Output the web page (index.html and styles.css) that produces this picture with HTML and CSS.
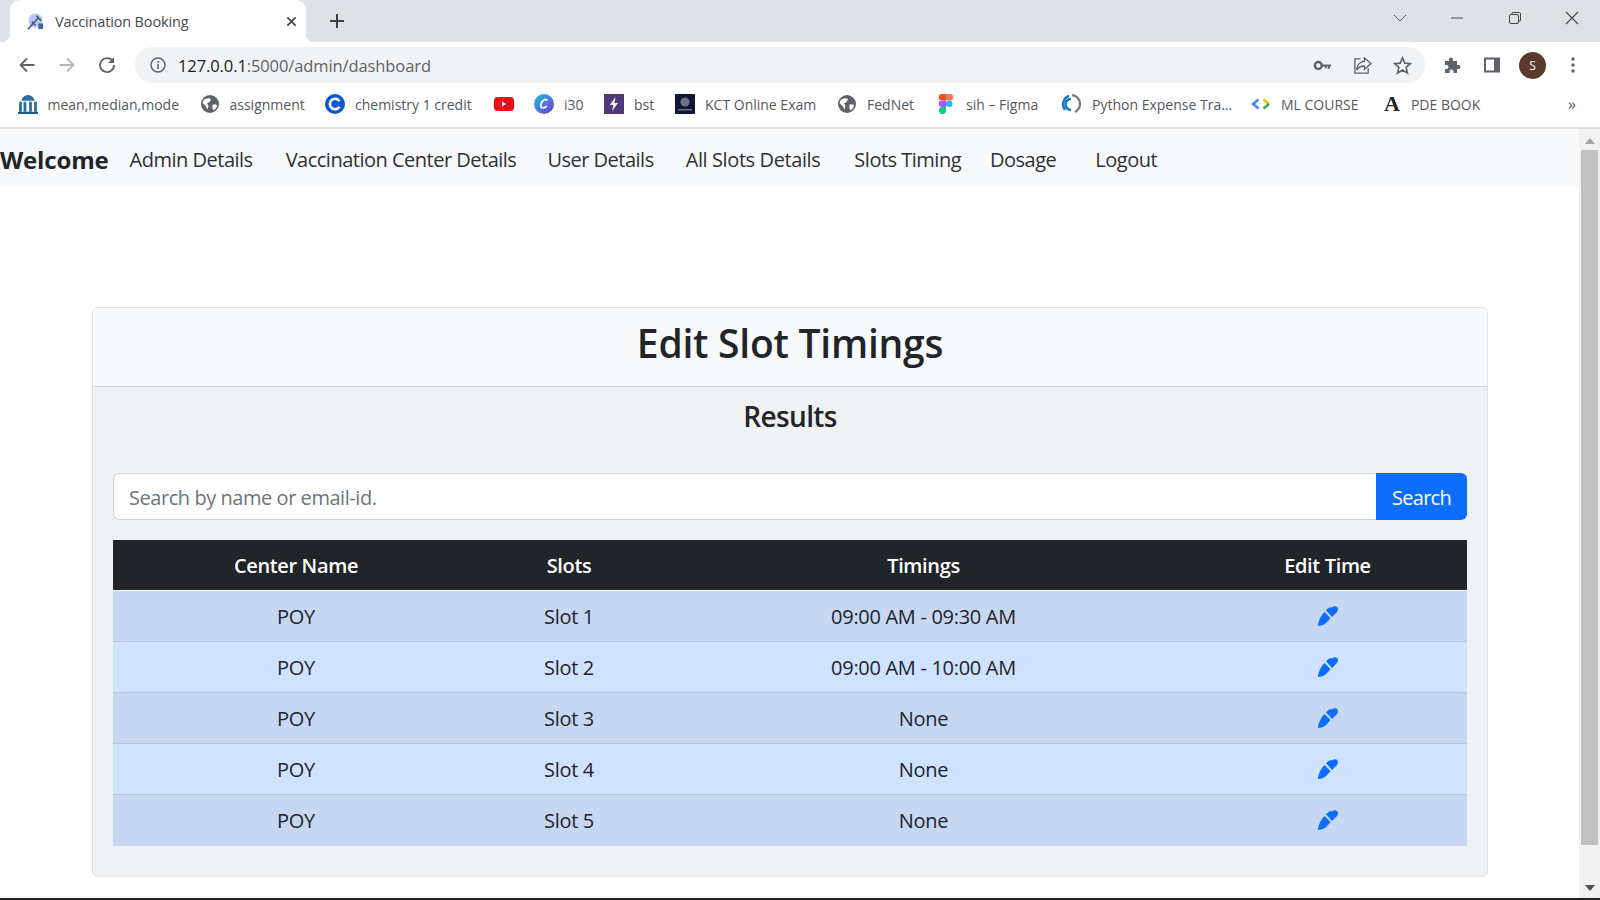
FILE: index.html
```html
<!DOCTYPE html>
<html lang="en">
<head>
<meta charset="utf-8">
<title>Vaccination Booking</title>
<link rel="stylesheet" href="styles.css">
</head>
<body>
<svg class="sprite" width="0" height="0" aria-hidden="true">
  <symbol id="globe" viewBox="0 0 18 18"><circle cx="9" cy="9" r="9" fill="#5f6368"/><path d="M3 4.500 8 3l2 1.500-2 3-2 .5 1.500 3-1 3.500-2-3.500L1.500 8zM11.500 9.500h4l.5 2-3 4-1.500-2z" fill="#fff"/></symbol>
  <symbol id="pen" viewBox="0 0 20 20"><path d="M0 20C0 16 2 11 6.500 6L12.500 12C9 17 5 20 0 20zM8 4.200 10 2.500C11 1.500 13 1 14 1.500 15.500 0 18 0 19.200 1 20.500 2.500 20 4.500 19 6L14 11z" fill="#0d6efd"/></symbol>
</svg>
<div class="tabstrip">
  <div class="tab">
    <svg class="favicon" viewBox="0 0 18 18"><circle cx="9" cy="8" r="7.500" fill="#bcc6ee"/><path d="M1 17 12 5M5 9l4 4M10 3l5 5" stroke="#4a5c8e" stroke-width="1.800" fill="none"/><rect x="12" y="11" width="5" height="6" fill="#3c6aa8"/></svg>
    <span class="tab-title">Vaccination Booking</span>
    <svg class="tab-close" viewBox="0 0 12 12"><path d="M1.500 1.500l9 9M10.500 1.500l-9 9" stroke="#3c4043" stroke-width="1.700"/></svg>
  </div>
  <svg class="newtab" viewBox="0 0 16 16"><path d="M8 1v14M1 8h14" stroke="#3c4043" stroke-width="2"/></svg>
  <div class="window-controls">
    <svg class="wc" viewBox="0 0 14 14"><path d="M1 4l6 6 6-6" stroke="#5f6368" fill="none"/></svg>
    <svg class="wc" viewBox="0 0 14 14"><path d="M1 7h12" stroke="#5f6368" stroke-width="1.200"/></svg>
    <svg class="wc" viewBox="0 0 14 14"><rect x="1.500" y="3.500" width="9" height="9" rx="1.500" fill="none" stroke="#444"/><path d="M4 3.500V2.500A1 1 0 0 1 5 1.500h6.500a1 1 0 0 1 1 1V9a1 1 0 0 1-1 1h-1" fill="none" stroke="#444"/></svg>
    <svg class="wc" viewBox="0 0 14 14"><path d="M1 1l12 12M13 1L1 13" stroke="#444" stroke-width="1.100"/></svg>
  </div>
</div>
<div class="toolbar">
  <svg class="nav-btn" viewBox="0 0 18 18"><path d="M16.500 9H2.500M9 2.500 2.500 9 9 15.500" fill="none" stroke="#5f6368" stroke-width="1.800"/></svg>
  <svg class="nav-btn" viewBox="0 0 18 18"><path d="M1.500 9h14M9 2.500 15.500 9 9 15.500" fill="none" stroke="#b5b8bc" stroke-width="1.800"/></svg>
  <svg class="nav-btn" viewBox="0 0 18 18"><path d="M15 5.500A7 7 0 1 0 16 9" fill="none" stroke="#5f6368" stroke-width="1.800"/><path d="M16 1v6h-6z" fill="#5f6368"/></svg>
  <div class="omnibox">
    <svg class="info" viewBox="0 0 16 16"><circle cx="8" cy="8" r="7" fill="none" stroke="#5f6368" stroke-width="1.500"/><path d="M8 7v5M8 4v1.700" stroke="#5f6368" stroke-width="1.600"/></svg>
    <span class="url"><span class="url-host">127.0.0.1</span>:5000/admin/dashboard</span>
    <svg class="omni-icon key" viewBox="0 0 18 18"><circle cx="5" cy="9" r="3.300" fill="none" stroke="#5f6368" stroke-width="2.400"/><path d="M8 8h9v2h-1v2h-2v-2h-1v1.500h-2V10H8z" fill="#5f6368"/></svg>
    <svg class="omni-icon" viewBox="0 0 20 20"><path d="M8 3H2v15h14v-5" fill="none" stroke="#5f6368" stroke-width="1.400"/><path d="M12 2l7 6-7 6v-3.500C8 10.500 5.500 12 4 15c0-5 3-9 8-9.500z" fill="none" stroke="#5f6368" stroke-width="1.400"/></svg>
    <svg class="omni-icon" viewBox="0 0 20 20"><path d="M10 2l2.400 5.500 6 .5-4.600 4 1.400 6L10 14.800 4.800 18l1.400-6-4.600-4 6-.5z" fill="none" stroke="#5f6368" stroke-width="1.700"/></svg>
  </div>
  <div class="toolbar-right">
    <svg class="tool" viewBox="0 0 18 18"><path d="M1 5h4V3.500a2 2 0 0 1 4 0V5h4v4h1.500a2 2 0 0 1 0 4H13v4H9.500v-1.500a2 2 0 0 0-4 0V17H1v-4h1.500a2 2 0 0 0 0-4H1z" fill="#5f6368"/></svg>
    <svg class="tool" viewBox="0 0 18 18"><path d="M1 1.500h16v15H1zM3 3.500v11h8v-11z" fill="#5f6368" fill-rule="evenodd"/></svg>
    <span class="avatar">S</span>
    <svg class="menu" viewBox="0 0 4 18"><circle cx="2" cy="3" r="1.700" fill="#5f6368"/><circle cx="2" cy="9" r="1.700" fill="#5f6368"/><circle cx="2" cy="15" r="1.700" fill="#5f6368"/></svg>
  </div>
</div>
<div class="bookmarks">
  <span class="bm bm-mean"><svg class="bm-icon" viewBox="0 0 18 18"><path d="M9 1a6 6 0 0 1 6 5H3a6 6 0 0 1 6-5z" fill="#2a6f9e"/><path d="M1 7h2.500v9H1zM5 7h2.500v9H5zM10 7h2.500v9H10zM14.500 7H17v9h-2.500z" fill="#2a6f9e"/><path d="M0 16h18v2H0z" fill="#1d5a84"/></svg>mean,median,mode</span>
  <span class="bm bm-assign"><svg class="bm-icon bm-globe" viewBox="0 0 18 18"><use href="#globe"/></svg>assignment</span>
  <span class="bm bm-chem"><svg class="bm-icon" viewBox="0 0 20 20"><circle cx="10" cy="10" r="10" fill="#0b57d0"/><path d="M14.500 7.200A5.200 5.200 0 1 0 14.500 12.800" fill="none" stroke="#fff" stroke-width="2.600"/></svg>chemistry 1 credit</span>
  <span class="bm bm-yt"><svg class="bm-icon" viewBox="0 0 20 20"><rect y="3" width="20" height="14" rx="3.500" fill="#e8101a"/><path d="M8 7.500v5l4-2.500z" fill="#fff"/></svg></span>
  <span class="bm bm-i30"><svg class="bm-icon" viewBox="0 0 20 20"><defs><linearGradient id="canva" x1="0" y1="0" x2="1" y2="1"><stop offset="0" stop-color="#12c4cf"/><stop offset=".5" stop-color="#4a7be0"/><stop offset="1" stop-color="#7a32c8"/></linearGradient></defs><circle cx="10" cy="10" r="10" fill="url(#canva)"/><path d="M13.500 6.500C12 4 7.500 6 6.800 11c-.4 3 3 4 6.200 1.200" fill="none" stroke="#fff" stroke-width="1.700"/></svg>i30</span>
  <span class="bm bm-bst"><svg class="bm-icon" viewBox="0 0 20 20"><rect width="20" height="20" fill="#4f3a78"/><path d="M11.500 3 6 11h3.500L8 17l6-8h-3.500z" fill="#fff"/></svg>bst</span>
  <span class="bm bm-kct"><svg class="bm-icon" viewBox="0 0 20 20"><rect width="20" height="20" fill="#10183a"/><circle cx="10" cy="8" r="4.500" fill="#6b7285"/><rect x="3" y="15" width="14" height="1.500" fill="#6b7285"/></svg>KCT Online Exam</span>
  <span class="bm bm-fed"><svg class="bm-icon bm-globe" viewBox="0 0 18 18"><use href="#globe"/></svg>FedNet</span>
  <span class="bm bm-sih"><svg class="bm-icon" viewBox="0 0 20 20"><path d="M6 0h4v6.500H6a3.250 3.250 0 0 1 0-6.500z" fill="#f24e1e"/><path d="M10 0h4a3.250 3.250 0 0 1 0 6.500h-4z" fill="#ff7262"/><path d="M6 6.500h4V13H6a3.250 3.250 0 0 1 0-6.500z" fill="#a259ff"/><circle cx="13.250" cy="9.750" r="3.250" fill="#1abcfe"/><path d="M6 13h4v3.500A3.500 3.500 0 1 1 6 13z" fill="#0acf83"/></svg>sih – Figma</span>
  <span class="bm bm-py"><svg class="bm-icon" viewBox="0 0 20 20"><path d="M9 5a5.500 5.500 0 0 0 0 11" fill="none" stroke="#1777c4" stroke-width="2.600"/><path d="M10 1a9 9 0 0 1 3 17" fill="none" stroke="#7a8088" stroke-width="2.400"/><path d="M3 16A9 9 0 0 1 7 2" fill="none" stroke="#1777c4" stroke-width="2.400"/></svg>Python Expense Tra...</span>
  <span class="bm bm-ml"><svg class="bm-icon" viewBox="0 0 20 20"><path d="M7.500 5.500 2 10l5.500 4.500" fill="none" stroke="#4285f4" stroke-width="2.400"/><path d="M12.500 5.500 18 10" fill="none" stroke="#fbbc04" stroke-width="2.400"/><path d="M18 10l-5.500 4.500" fill="none" stroke="#34a853" stroke-width="2.400"/></svg>ML COURSE</span>
  <span class="bm bm-pde"><span class="serif-a">A</span>PDE BOOK</span>
  <span class="bm-more">»</span>
</div>
<div class="viewport">
  <main class="page">
    <nav class="navbar">
      <span class="brand">Welcome</span>
      <a class="nav-link">Admin Details</a>
      <a class="nav-link">Vaccination Center Details</a>
      <a class="nav-link nav-user">User Details</a>
      <a class="nav-link nav-all">All Slots Details</a>
      <a class="nav-link nav-timing">Slots Timing</a>
      <a class="nav-link nav-dosage">Dosage</a>
      <a class="nav-link">Logout</a>
    </nav>
    <section class="card">
      <header class="card-header"><h1>Edit Slot Timings</h1></header>
      <div class="card-body">
        <h2>Results</h2>
        <form class="search">
          <input class="search-input" type="text" placeholder="Search by name or email-id.">
          <button class="search-btn" type="button">Search</button>
        </form>
        <table class="slots">
          <colgroup><col class="c1"><col class="c2"><col class="c3"><col class="c4"></colgroup>
          <thead><tr><th>Center Name</th><th>Slots</th><th>Timings</th><th>Edit Time</th></tr></thead>
          <tbody>
            <tr><td>POY</td><td>Slot 1</td><td>09:00 AM - 09:30 AM</td><td><svg class="pen"><use href="#pen"/></svg></td></tr>
            <tr><td>POY</td><td>Slot 2</td><td>09:00 AM - 10:00 AM</td><td><svg class="pen"><use href="#pen"/></svg></td></tr>
            <tr><td>POY</td><td>Slot 3</td><td>None</td><td><svg class="pen"><use href="#pen"/></svg></td></tr>
            <tr><td>POY</td><td>Slot 4</td><td>None</td><td><svg class="pen"><use href="#pen"/></svg></td></tr>
            <tr><td>POY</td><td>Slot 5</td><td>None</td><td><svg class="pen"><use href="#pen"/></svg></td></tr>
          </tbody>
        </table>
      </div>
    </section>
  </main>
  <div class="scrollbar">
    <span class="arrow-up"></span>
    <span class="thumb"></span>
    <span class="arrow-down"></span>
  </div>
</div>
<div class="taskbar-line"></div>
</body>
</html>
```
FILE: styles.css
```css
* { box-sizing: border-box; }
html, body { margin: 0; height: 900px; overflow: hidden; }
body {
  font-family: "Open Sans", "Noto Sans", sans-serif;
  background: #fff;
  color: #212529;
  display: flex;
  flex-direction: column;
}
.sprite { position: absolute; }

/* tab strip */
.tabstrip {
  height: 42px;
  flex: none;
  background: #dee1e6;
  display: flex;
  align-items: center;
  padding-left: 10px;
}
.tab {
  width: 296px;
  height: 42px;
  background: #fff;
  border-radius: 10px 10px 0 0;
  display: flex;
  align-items: center;
  padding: 0 8px 0 17px;
  position: relative;
}
.tab::before, .tab::after {
  content: "";
  position: absolute;
  bottom: 0;
  width: 8px;
  height: 8px;
}
.tab::before { left: -8px; background: radial-gradient(circle at 0 0, #dee1e6 8px, #fff 8.500px); }
.tab::after { right: -8px; background: radial-gradient(circle at 100% 0, #dee1e6 8px, #fff 8.500px); }
.favicon { width: 17px; height: 17px; flex: none; }
.tab-title { margin-left: 11px; font-size: 14.500px; color: #45494d; letter-spacing: -0.15px; flex: 1; }
.tab-close { width: 11px; height: 11px; flex: none; margin-right: 1px; }
.newtab { width: 16px; height: 16px; margin-left: 23px; }
.window-controls { margin-left: auto; display: flex; align-items: center; gap: 43.400px; padding: 0 21px 6px 0; }
.wc { width: 14px; height: 14px; display: block; }

/* toolbar */
.toolbar {
  height: 44px;
  padding: 2px 0 0 18px;
  flex: none;
  background: #fff;
  display: flex;
  align-items: center;
}
.nav-btn { width: 18px; height: 18px; margin-right: 22px; flex: none; }
.nav-btn:nth-of-type(3) { margin-right: 19px; }
.omnibox {
  width: 1290px;
  height: 36px;
  background: #f1f3f4;
  border-radius: 18px;
  display: flex;
  align-items: center;
  padding: 0 13px 0 15px;
  flex: none;
}
.info { width: 16px; height: 16px; flex: none; }
.url { margin-left: 12px; font-size: 16.500px; letter-spacing: -0.1px; color: #5f6368; flex: 1; }
.url-host { color: #202124; }
.omni-icon { width: 19px; height: 19px; margin-left: 21px; flex: none; }
.key { margin-left: 0; }
.toolbar-right { display: flex; align-items: center; margin-left: 19px; }
.tool { width: 18px; height: 18px; margin-right: 21px; flex: none; }
.avatar {
  width: 27px; height: 27px; border-radius: 50%;
  background: #5b3a2e; color: #fff;
  font-size: 12px;
  display: flex; align-items: center; justify-content: center;
  margin-left: -3px;
}
.menu { width: 4px; height: 18px; margin-left: 25px; }

/* bookmarks */
.bookmarks {
  height: 43px;
  padding: 0 0 5px 17.500px;
  flex: none;
  background: #fff;
  display: flex;
  align-items: center;
  font-size: 14px;
  letter-spacing: 0;
  color: #55585c;
  border-bottom: 2px solid #e0e0e0;
}
.bm { display: flex; align-items: center; white-space: nowrap; flex: none; }
.bm-icon { width: 20px; height: 20px; margin-right: 10px; flex: none; }
.bm-globe { width: 18px; height: 18px; margin-right: 11px; }
.bm-mean { width: 183px; }
.bm-assign { width: 124.500px; }
.bm-chem { width: 169px; }
.bm-yt { width: 40px; }
.bm-i30 { width: 70px; }
.bm-bst { width: 71px; }
.bm-kct { width: 163px; }
.bm-fed { width: 98px; }
.bm-sih { width: 126px; }
.bm-py { width: 189px; }
.bm-ml { width: 133px; }
.serif-a { font-family: "Liberation Serif", serif; font-weight: 700; font-size: 22px; color: #222; margin-right: 11px; line-height: 1; }
.bm-more { margin-left: auto; margin-right: 24px; font-size: 16px; }

/* page */
.viewport { flex: 1; display: flex; min-height: 0; }
.page { flex: 1; min-width: 0; }
.navbar {
  height: 57px;
  padding-top: 3px;
  background: #f8f9fa;
  display: flex;
  align-items: center;
  font-size: 20px;
  letter-spacing: -0.5px;
}
.brand { font-weight: 700; font-size: 24px; letter-spacing: -0.15px; margin-right: 21px; color: #212529; }
.nav-link { margin-right: 33px; color: #2d3135; white-space: nowrap; }
.nav-user { margin-left: -2px; }
.nav-all { margin-left: -1px; margin-right: 34px; letter-spacing: -0.4px; }
.nav-timing { margin-right: 29px; }
.nav-dosage { margin-right: 39px; }

.card {
  width: 1396px;
  margin: 121px 0 0 92px;
  background: #f0f1f3;
  border: 1px solid #dfe1e3;
  border-radius: 6px;
  overflow: hidden;
}
.card-header {
  height: 79px;
  padding-bottom: 9px;
  background: #f8f9fa;
  border-bottom: 1px solid #cfd1d3;
  display: flex;
  align-items: center;
  justify-content: center;
}
h1 { margin: 0; font-size: 39px; font-weight: 600; letter-spacing: -0.25px; color: #212529; }
.card-body { padding: 0 20px 30px; }
h2 { margin: 0; padding-top: 10px; height: 86px; text-align: center; font-size: 28px; font-weight: 600; letter-spacing: -0.6px; }
.search { display: flex; height: 47px; margin-bottom: 20px; }
.search-input {
  flex: 1;
  min-width: 0;
  border: 1px solid #ced4da;
  border-right: 0;
  border-radius: 6px 0 0 6px;
  background: #fff;
  padding: 2px 15px 0;
  font: inherit;
  font-size: 20px;
  letter-spacing: -0.45px;
}
.search-input::placeholder { color: #6c757d; opacity: 1; }
.search-btn {
  width: 91px;
  border: 0;
  border-radius: 0 6px 6px 0;
  background: #0d6efd;
  color: #fff;
  font: inherit;
  font-size: 20px;
  letter-spacing: -0.7px;
  padding: 2px 0 0;
}
.slots { width: 100%; border-collapse: collapse; table-layout: fixed; text-align: center; font-size: 20px; letter-spacing: -0.3px; }
.c1 { width: 366px; }
.c2 { width: 180px; }
.c3 { width: 529px; }
th { height: 50px; background: #212529; color: #fff; font-weight: 600; font-size: 20px; padding: 2px 0 0; border-bottom: 1px solid #fff; letter-spacing: -0.35px; }
td { height: 51px; padding: 2px 0 0; border-bottom: 1px solid #b9c7dd; background: #cfe2ff; color: #212529; }
tbody tr:nth-child(odd) td { background: #c5d7f2; }
tbody tr:last-child td { border-bottom-color: #c5d7f2; }
.pen { width: 20px; height: 20px; display: block; margin: 0 auto 2px; }

/* scrollbar */
.scrollbar { width: 21px; flex: none; background: #f1f1f1; display: flex; flex-direction: column; align-items: center; }
.arrow-up { width: 0; height: 0; margin: 9px 0 6px; border: 5px solid transparent; border-top: 0; border-bottom: 6px solid #a3a3a3; }
.thumb { width: 17px; height: 695px; background: #c1c1c1; }
.arrow-down { width: 0; height: 0; margin-top: 40px; border: 5px solid transparent; border-bottom: 0; border-top: 6px solid #505050; }
.taskbar-line { height: 2px; flex: none; background: #222; }
```
